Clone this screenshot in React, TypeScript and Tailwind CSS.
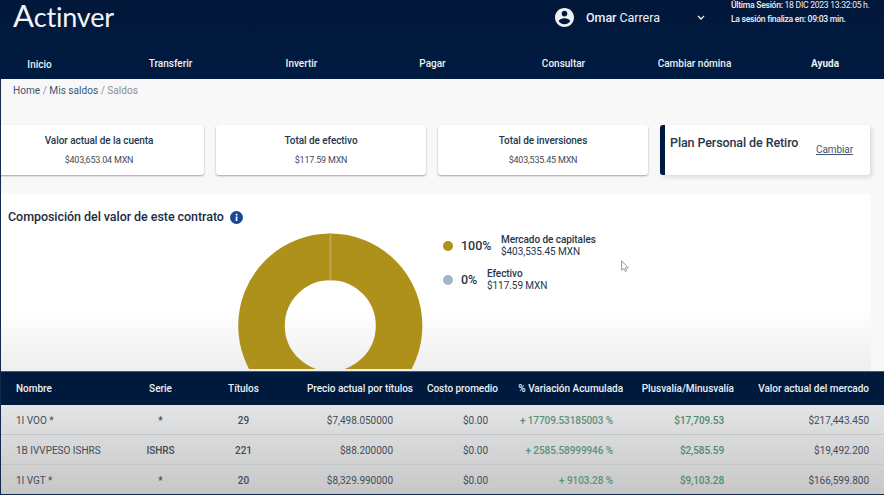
import React from "react";

const navItems = ["Inicio", "Transferir", "Invertir", "Pagar", "Consultar", "Cambiar nómina", "Ayuda"];

const cards = [
  { title: "Valor actual de la cuenta", amount: "$403,653.04 MXN" },
  { title: "Total de efectivo", amount: "$117.59 MXN" },
  { title: "Total de inversiones", amount: "$403,535.45 MXN" },
];

const rows = [
  { name: "1I VOO *", series: "*", units: "29", price: "$7,498.050000", cost: "$0.00", change: "+ 17709.53185003 %", gain: "$17,709.53", value: "$217,443.450" },
  { name: "1B IVVPESO ISHRS", series: "ISHRS", units: "221", price: "$88.200000", cost: "$0.00", change: "+ 2585.58999946 %", gain: "$2,585.59", value: "$19,492.200" },
  { name: "1I VGT *", series: "*", units: "20", price: "$8,329.990000", cost: "$0.00", change: "+ 9103.28 %", gain: "$9,103.28", value: "$166,599.800" },
];

const columns = "grid grid-cols-[104px_81px_85px_127px_85px_125px_111px_135px] items-center pl-[15px]";

function Header() {
  return (
    <header className="h-[79px] bg-linear-to-b from-[#02183a] to-[#001b41] text-[#eef0f2]">
      <div className="flex h-[48px] items-start">
        <div className="w-[541px] pl-[13px] font-[Lato,sans-serif] text-[27px] leading-[30px] tracking-[-0.2px] whitespace-nowrap text-[#f4f5f6]">
          <span className="text-[31px]">A</span>ctinver
        </div>
        <div className="flex h-[35px] w-[190px] items-center">
          <svg viewBox="2 2 20 20" className="ml-[14px] size-[19px]" fill="#eef0f2">
            <path d="M12 2C6.48 2 2 6.48 2 12s4.48 10 10 10 10-4.48 10-10S17.52 2 12 2zm0 3c1.66 0 3 1.34 3 3s-1.34 3-3 3-3-1.34-3-3 1.34-3 3-3zm0 14.2c-2.5 0-4.71-1.28-6-3.22.03-1.99 4-3.08 6-3.08 1.99 0 5.97 1.09 6 3.08-1.29 1.94-3.5 3.22-6 3.22z" />
          </svg>
          <span className="ml-3 w-[111px] pt-px text-[12.5px] tracking-[-0.05px]"><b className="font-medium">Omar</b> Carrera</span>
          <svg viewBox="0 0 8 6" className="h-[6px] w-[8px]" fill="none" stroke="#eef0f2" strokeWidth="1.3">
            <path d="M1 1l3 3 3-3" />
          </svg>
        </div>
        <div className="-mt-[2px] text-[8.6px] leading-[14px] font-medium tracking-[-0.27px] whitespace-nowrap">
          <p>Última Sesión: <span className="font-normal">18 DIC 2023 13:32:05 h.</span></p>
          <p>La sesión finaliza en: 09:03 min.</p>
        </div>
      </div>
      <nav className="-ml-[26px] flex w-[917px] pt-[7px] text-[10px] leading-[17px] font-medium">
        {navItems.map((item) => (
          <a key={item} className="w-[131px] text-center first:pt-px last:pr-px last:font-bold">{item}</a>
        ))}
      </nav>
    </header>
  );
}

function Legend() {
  return (
    <div className="mt-[39px] ml-[20px] text-[#26364b]">
      <div className="flex h-[25px] items-center">
        <i className="size-[10px] rounded-full bg-[#ae911b]" />
        <span className="ml-2 w-[40px] pt-px text-[12.5px] font-medium">100%</span>
        <p className="text-[10px] leading-[12px] tracking-[-0.06px]"><b className="font-medium">Mercado de capitales</b><br />$403,535.45 MXN</p>
      </div>
      <div className="mt-[9px] flex h-[25px] items-center">
        <i className="size-[10px] rounded-full bg-[#a3b6c6]" />
        <span className="ml-2 w-[26px] pt-px text-[12.5px] font-medium">0%</span>
        <p className="text-[10px] leading-[12px] tracking-[-0.06px]"><b className="font-medium">Efectivo</b><br />$117.59 MXN</p>
      </div>
    </div>
  );
}

function Composition() {
  return (
    <section className="relative mr-[13px] flex h-[177px] bg-linear-to-b from-white from-65% to-[#eeeeef]">
      <h2 className="flex h-[46px] w-[236px] shrink-0 items-center pl-[7px] text-[12.5px] font-medium tracking-[-0.06px] whitespace-nowrap text-[#1c2c41]">
        Composición del valor de este contrato
        <svg viewBox="0 0 13 13" className="ml-[6px] size-[13px] shrink-0">
          <circle cx="6.5" cy="6.5" r="6.5" fill="#17489a" />
          <path d="M5.7 2.8h1.7v1.6H5.7zM5.7 5.4h1.7V10H5.7z" fill="white" />
        </svg>
      </h2>
      <svg viewBox="0 0 186 136" className="mt-[39px] h-[136px] w-[186px] shrink-0">
        <circle cx="93.3" cy="92.7" r="68.8" fill="none" stroke="#ae911b" strokeWidth="46.6" />
        <path d="M93.4.5v46.8" stroke="#b6a34f" strokeWidth="2.4" />
      </svg>
      <Legend />
      <svg viewBox="0 0 8 12" className="absolute top-[66px] left-[620px] h-[12px] w-[8px]">
        <path d="M.6.8v9.6l2.2-2 1.5 3 1.4-.7-1.4-2.9h3z" fill="white" stroke="#7b7f88" strokeWidth=".8" />
      </svg>
    </section>
  );
}

function Holdings() {
  return (
    <section className="text-[10px] tracking-[-0.02px] text-[#434c59]">
      <div className={columns + " h-[34px] border-t border-[#4e5b70] bg-[#001a3d] font-medium whitespace-nowrap text-[#eef0f2]"}>
        <span>Nombre</span>
        <span className="text-center">Serie</span>
        <span className="text-center">Títulos</span>
        <span className="text-right">Precio actual por títulos</span>
        <span className="text-right">Costo promedio</span>
        <span className="text-right">% Variación Acumulada</span>
        <span className="text-right">Plusvalía/Minusvalía</span>
        <span className="text-right">Valor actual del mercado</span>
      </div>
      <div className="h-[89px] bg-linear-to-b from-[#e3e4e5] to-[#c7c7c8]">
        {rows.map((row) => (
          <div key={row.name} className={columns + " h-[30px] border-b border-[#c3c5c7] pt-[2px] whitespace-nowrap last:h-[29px] last:border-0 last:pt-px"}>
            <span>{row.name}</span>
            <span className="text-center font-medium">{row.series}</span>
            <span className="text-center font-medium">{row.units}</span>
            <span className="pr-5 text-right">{row.price}</span>
            <span className="pr-[10px] text-right">{row.cost}</span>
            <span className="pr-[10px] text-right font-medium tracking-[-0.08px] text-[#5b9179]">{row.change}</span>
            <span className="pr-[10px] text-right font-medium tracking-[-0.08px] text-[#4f8b6f]">{row.gain}</span>
            <span className="text-right">{row.value}</span>
          </div>
        ))}
      </div>
    </section>
  );
}

export default function App() {
  return (
    <div className="h-[495px] w-[884px] overflow-hidden bg-[#f8f8f9] font-[Roboto,sans-serif]">
      <Header />
      <div className="h-[416px] overflow-hidden border-b border-l border-[#14294b]">
        <div className="h-[46px] pt-[4px] pl-[12px] text-[10.1px] leading-[15px] text-[#8b8f93]">
          <span className="text-[#3d5673]">Home</span> / <span className="text-[#3d5673]">Mis saldos</span> / Saldos
        </div>
        <div className="-ml-[7px] flex h-[69px] items-start gap-[12px] text-[#26364b]">
          {cards.map((card) => (
            <div key={card.title} className="h-[50px] w-[210px] shrink-0 rounded-[3px] bg-white pt-[8px] text-center shadow-[0_1px_2px_rgba(0,0,0,0.35)]">
              <p className="text-[10px] leading-[15px] font-medium tracking-[-0.06px]">{card.title}</p>
              <p className="mt-[5px] text-[9px] leading-[14px] tracking-[-0.22px] text-[#414b59]">{card.amount}</p>
            </div>
          ))}
          <div className="flex h-[50px] w-[210px] shrink-0 rounded-[3px] border-l-[5px] border-[#001a3d] bg-white pl-[5px] shadow-[2px_2px_5px_rgba(0,0,0,0.13)]">
            <p className="w-[146px] pt-[9px] text-[12.5px] leading-[18px] font-medium tracking-[-0.1px] whitespace-nowrap">Plan Personal de Retiro</p>
            <a className="pt-[17px] text-[10px] leading-[16px] tracking-[-0.08px] text-[#3d5673] underline">Cambiar</a>
          </div>
        </div>
        <Composition />
        <Holdings />
      </div>
    </div>
  );
}
